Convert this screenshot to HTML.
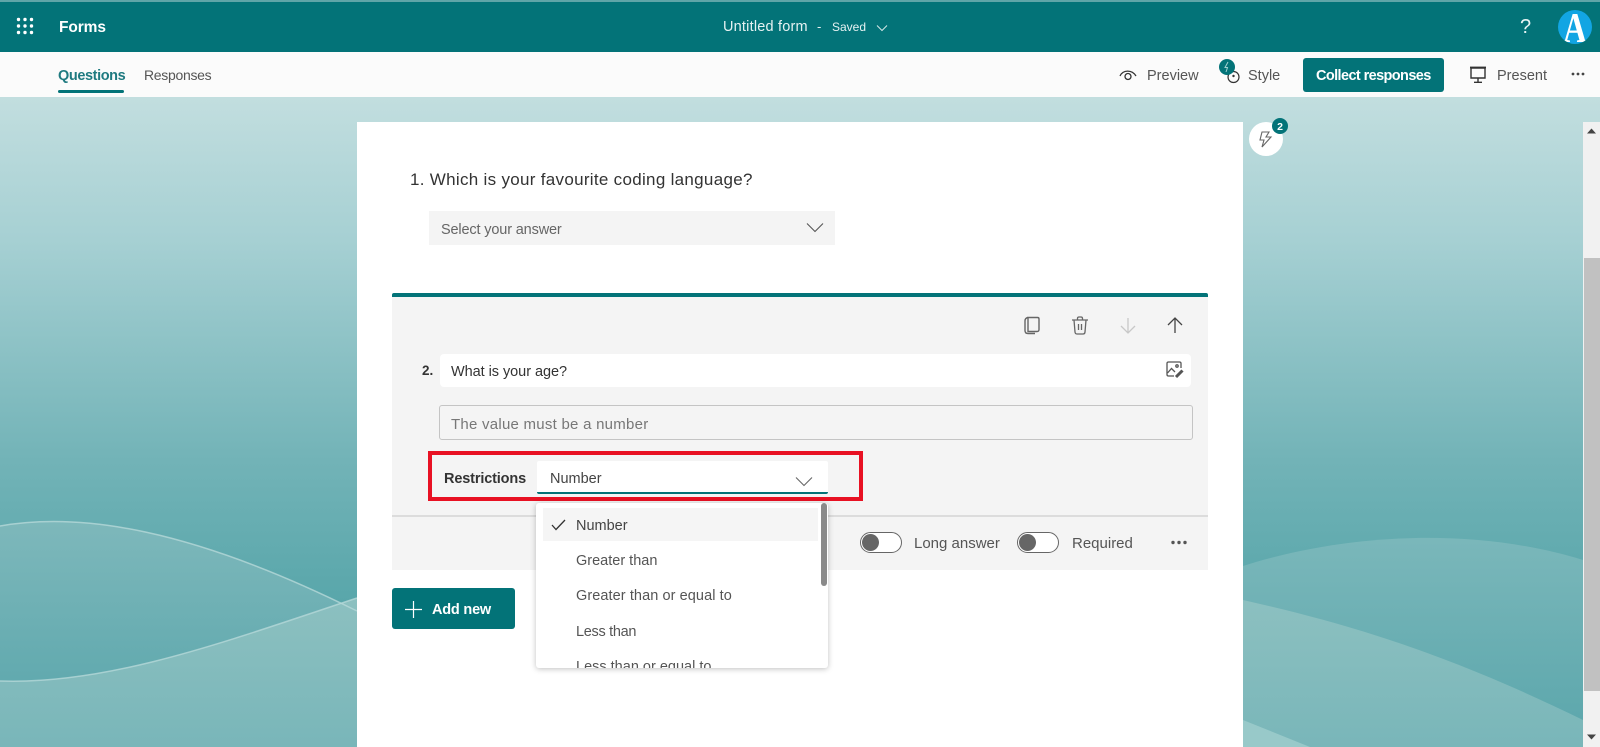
<!DOCTYPE html>
<html lang="en"><head><meta charset="utf-8"><title>Untitled form</title>
<style>
*{box-sizing:border-box}
html,body{margin:0;width:1600px;height:747px;overflow:hidden;background:#fff;font-family:"Liberation Sans",sans-serif;color:#333}
.a{position:absolute}
.t{position:absolute;white-space:nowrap;line-height:20px;height:20px}
svg{position:absolute;overflow:visible}
</style></head><body>
<svg style="left:0;top:0" width="1600" height="747" viewBox="0 0 1600 747">
<defs>
<linearGradient id="bg" x1="0" y1="0" x2="0" y2="1"><stop offset="0" stop-color="#c2dedf"/><stop offset=".22" stop-color="#a6d0d3"/><stop offset=".56" stop-color="#72b3b7"/><stop offset=".8" stop-color="#56a5a9"/><stop offset="1" stop-color="#56a5a9"/></linearGradient>
<linearGradient id="w1" gradientUnits="userSpaceOnUse" x1="0" y1="520" x2="0" y2="690"><stop offset="0" stop-color="#7eb8bb"/><stop offset="1" stop-color="#60a9ae"/></linearGradient>
<linearGradient id="w2" gradientUnits="userSpaceOnUse" x1="0" y1="600" x2="0" y2="747"><stop offset="0" stop-color="#8cc0c0"/><stop offset="1" stop-color="#79b6b9"/></linearGradient>
<linearGradient id="w3" gradientUnits="userSpaceOnUse" x1="0" y1="540" x2="0" y2="720"><stop offset="0" stop-color="#7ab7ba"/><stop offset="1" stop-color="#5ea8ad"/></linearGradient>
<clipPath id="av"><circle cx="17" cy="17" r="17"/></clipPath>
</defs>
<rect y="97" width="1600" height="650" fill="url(#bg)"/>
<path d="M0 526C80 512 190 528 357 611V747H0Z" fill="url(#w1)"/>
<path d="M0 681C110 685 230 640 357 598V747H0Z" fill="url(#w2)"/>
<path d="M0 526C80 512 190 528 357 611" fill="none" stroke="#b5d8d8" stroke-opacity=".8" stroke-width="1.5"/>
<path d="M0 681C110 685 230 640 357 598" fill="none" stroke="#b5d8d8" stroke-opacity=".8" stroke-width="1.5"/>
<path d="M1243 566C1340 535 1470 525 1583 560V747H1243Z" fill="url(#w3)"/>
<path d="M1243 600C1340 622 1440 650 1583 720V747H1243Z" fill="url(#w2)"/>
<path d="M1243 720L1310 747H1243Z" fill="#98c9c9"/>
</svg>

<!-- header -->
<div class="a" style="left:0;top:0;width:1600px;height:52px;background:#037378;border-top:2px solid #5fa5a8"></div>
<svg style="left:17px;top:18px" width="16" height="16" fill="#fff"><circle cx="1.5" cy="1.5" r="1.7"/><circle cx="8" cy="1.5" r="1.7"/><circle cx="14.5" cy="1.5" r="1.7"/><circle cx="1.5" cy="8" r="1.7"/><circle cx="8" cy="8" r="1.7"/><circle cx="14.5" cy="8" r="1.7"/><circle cx="1.5" cy="14.5" r="1.7"/><circle cx="8" cy="14.5" r="1.7"/><circle cx="14.5" cy="14.5" r="1.7"/></svg>
<div class="t" style="left:59px;top:18px;color:#fff;font-size:15.5px;font-weight:700;letter-spacing:-.1px">Forms</div>
<div class="t" style="left:723px;top:17px;color:#e6f2f2;font-size:14.5px;letter-spacing:.2px">Untitled form</div>
<div class="t" style="left:817px;top:17px;color:#e6f2f2;font-size:13px">-</div>
<div class="t" style="left:832px;top:17px;color:#e6f2f2;font-size:12px">Saved</div>
<svg style="left:876px;top:24px" width="12" height="8" fill="none" stroke="#d5e8e8" stroke-width="1"><path d="M1 1.5L6 6.5L11 1.5"/></svg>
<div class="t" style="left:1520px;top:16px;color:#e8f4f4;font-size:20px;line-height:22px">?</div>
<svg style="left:1558px;top:10px" width="34" height="34"><circle cx="17" cy="17" r="17" fill="#12a5e3"/><g clip-path="url(#av)"><text transform="translate(17 32) scale(.78 1)" text-anchor="middle" font-family="Liberation Serif,serif" font-size="42" font-weight="700" fill="#fff">A</text></g></svg>

<!-- command bar -->
<div class="a" style="left:0;top:52px;width:1600px;height:45px;background:#fbfbfb"></div>
<div class="t" style="left:58px;top:66px;color:#1f7a80;font-size:14.5px;font-weight:700;letter-spacing:-.4px">Questions</div>
<div class="a" style="left:58px;top:90px;width:66px;height:3px;background:#037378;border-radius:2px"></div>
<div class="t" style="left:144px;top:65px;color:#555;font-size:14px;letter-spacing:-.3px">Responses</div>
<svg style="left:1119px;top:68px" width="18" height="14" fill="none" stroke="#333" stroke-width="1.3"><path d="M1 8C4 1.5 13 1.5 17 8"/><circle cx="9" cy="8.5" r="3"/></svg>
<div class="t" style="left:1147px;top:66px;color:#555;font-size:14.5px">Preview</div>
<svg style="left:1219px;top:59px" width="22" height="24"><circle cx="14.5" cy="18" r="5.5" fill="none" stroke="#333" stroke-width="1.2"/><circle cx="14.5" cy="17" r="1.2" fill="#333"/><circle cx="8" cy="8" r="8" fill="#037378"/><path d="M9 3L6 8.500H8.500L7 13" fill="none" stroke="#9fd0d0" stroke-width="1"/></svg>
<div class="t" style="left:1248px;top:66px;color:#555;font-size:14.5px">Style</div>
<div class="a" style="left:1303px;top:58px;width:141px;height:34px;background:#037378;border-radius:3px"></div>
<div class="t" style="left:1316px;top:66px;color:#fff;font-size:14.5px;font-weight:700;letter-spacing:-.6px">Collect responses</div>
<svg style="left:1469px;top:66px" width="18" height="18" fill="none" stroke="#333" stroke-width="1.4"><path d="M2 2H16V12H2Z"/><path d="M1 1.500H17" stroke-width="1.800"/><path d="M9 12V16M5 16.300H13"/></svg>
<div class="t" style="left:1497px;top:66px;color:#555;font-size:14.5px">Present</div>
<svg style="left:1571px;top:72px" width="14" height="4" fill="#444"><circle cx="2" cy="2" r="1.400"/><circle cx="7" cy="2" r="1.400"/><circle cx="12" cy="2" r="1.400"/></svg>

<!-- card -->
<div class="a" style="left:357px;top:122px;width:886px;height:625px;background:#fff"></div>
<svg style="left:1249px;top:122px" width="40" height="36"><circle cx="17" cy="17" r="17" fill="#fff"/><path d="M20 10L13 10L11 18H15L13 25L22 15H17Z" fill="none" stroke="#666" stroke-width="1.100"/><circle cx="31" cy="4" r="8" fill="#037378"/><text x="31" y="8" text-anchor="middle" font-family="Liberation Sans,sans-serif" font-size="10.500" font-weight="700" fill="#fff">2</text></svg>

<div class="t" style="left:410px;top:170px;color:#333;font-size:17px;letter-spacing:.3px">1. Which is your favourite coding language?</div>
<div class="a" style="left:429px;top:211px;width:406px;height:34px;background:#f4f4f4"></div>
<div class="t" style="left:441px;top:220px;color:#666;font-size:14.5px;letter-spacing:-.15px">Select your answer</div>
<svg style="left:806px;top:222px" width="18" height="12" fill="none" stroke="#555" stroke-width="1.100"><path d="M1 1.500L9 9.500L17 1.500"/></svg>

<!-- active question -->
<div class="a" style="left:392px;top:293px;width:816px;height:277px;background:#f4f4f4;border-top:4px solid #037378;border-radius:2px 2px 0 0"></div>
<svg style="left:1023px;top:316px" width="18" height="19" fill="none" stroke="#666" stroke-width="1.400"><path d="M5 1.500H14.500Q16 1.500 16 3V13.500Q16 15.500 14 15.500H5Z"/><path d="M5 1.500Q2 2 2 5V14.500Q2 17.500 5 17.500H12"/></svg>
<svg style="left:1071px;top:316px" width="18" height="19" fill="none" stroke="#666" stroke-width="1.300"><path d="M1 4H17M6.500 4V2.500Q6.500 1 8 1H10Q11.500 1 11.500 2.500V4M3 4L4 16Q4.200 18 6 18H12Q13.800 18 14 16L15 4M7.500 8V14M10.500 8V14"/></svg>
<svg style="left:1120px;top:317px" width="16" height="17" fill="none" stroke="#c8c8c8" stroke-width="1.300"><path d="M8 1V16M1 9L8 16L15 9"/></svg>
<svg style="left:1167px;top:317px" width="16" height="17" fill="none" stroke="#444" stroke-width="1.300"><path d="M8 16V1M1 8L8 1L15 8"/></svg>

<div class="t" style="left:422px;top:361px;color:#333;font-size:13.500px;font-weight:700">2.</div>
<div class="a" style="left:440px;top:354px;width:751px;height:33px;background:#fff;border-radius:4px"></div>
<div class="t" style="left:451px;top:362px;color:#333;font-size:14.5px;letter-spacing:-.05px">What is your age?</div>
<svg style="left:1166px;top:361px" width="18" height="18" fill="none" stroke="#555" stroke-width="1.300"><path d="M15 7V2.500Q15 1 13.500 1H2.500Q1 1 1 2.500V13.500Q1 15 2.500 15H8"/><path d="M1.500 12L5.500 7.500L9 11"/><circle cx="11" cy="5" r="1.200"/><path d="M10 16L16.500 9.500" stroke-width="3"/></svg>
<div class="a" style="left:439px;top:405px;width:754px;height:35px;background:#f4f4f4;border:1px solid #c4c4c4;border-radius:3px"></div>
<div class="t" style="left:451px;top:415px;color:#777;font-size:15px;letter-spacing:.25px">The value must be a number</div>

<div class="a" style="left:392px;top:515px;width:816px;height:2px;background:#dcdcdc"></div>

<div class="a" style="left:428px;top:451px;width:435px;height:50px;border:4px solid #e81123"></div>
<div class="t" style="left:444px;top:469px;color:#333;font-size:14.5px;font-weight:700;letter-spacing:-.15px">Restrictions</div>
<div class="a" style="left:537px;top:461px;width:291px;height:33px;background:#fff;border-bottom:2px solid #037378;border-radius:2px"></div>
<div class="t" style="left:550px;top:469px;color:#444;font-size:14.5px">Number</div>
<svg style="left:795px;top:476px" width="18" height="11" fill="none" stroke="#666" stroke-width="1.100"><path d="M1 1.500L9 9.500L17 1.500"/></svg>

<!-- toggles -->
<div class="a" style="left:860px;top:532px;width:42px;height:21px;background:#fff;border:1px solid #666;border-radius:11px"></div>
<div class="a" style="left:862px;top:534px;width:17px;height:17px;background:#666;border-radius:50%"></div>
<div class="t" style="left:914px;top:534px;color:#555;font-size:15px">Long answer</div>
<div class="a" style="left:1017px;top:532px;width:42px;height:21px;background:#fff;border:1px solid #666;border-radius:11px"></div>
<div class="a" style="left:1019px;top:534px;width:17px;height:17px;background:#666;border-radius:50%"></div>
<div class="t" style="left:1072px;top:534px;color:#555;font-size:15px">Required</div>
<svg style="left:1170px;top:540px" width="18" height="5" fill="#555"><circle cx="3" cy="2.500" r="1.700"/><circle cx="9" cy="2.500" r="1.700"/><circle cx="15" cy="2.500" r="1.700"/></svg>

<!-- add new -->
<div class="a" style="left:392px;top:588px;width:123px;height:41px;background:#037378;border-radius:3px"></div>
<svg style="left:405px;top:601px" width="17" height="17" stroke="#fff" stroke-width="1.200"><path d="M8.500 0V17M0 8.500H17"/></svg>
<div class="t" style="left:432px;top:600px;color:#fff;font-size:14.5px;font-weight:700;letter-spacing:-.2px">Add new</div>

<!-- dropdown -->
<div class="a" style="left:536px;top:503px;width:292px;height:165px;background:#fff;border-radius:3px;box-shadow:0 1px 6px rgba(0,0,0,.25);overflow:hidden">
<div class="a" style="left:7px;top:5px;width:275px;height:33px;background:#f5f5f5"></div>
<div class="a" style="left:285px;top:0;width:6px;height:83px;background:#8a8a8a;border-radius:3px"></div>
<svg style="left:15px;top:16px" width="15" height="12" fill="none" stroke="#333" stroke-width="1.300"><path d="M1 6L5 10.500L14 1"/></svg>
<div class="t" style="left:40px;top:13px;color:#444;font-size:14.5px">Number</div>
<div class="t" style="left:40px;top:48px;color:#555;font-size:14.5px">Greater than</div>
<div class="t" style="left:40px;top:83px;color:#555;font-size:14.5px;letter-spacing:.08px">Greater than or equal to</div>
<div class="t" style="left:40px;top:119px;color:#555;font-size:14.5px;letter-spacing:-.3px">Less than</div>
<div class="t" style="left:40px;top:154px;color:#555;font-size:14.5px">Less than or equal to</div>
</div>

<!-- page scrollbar -->
<div class="a" style="left:1583px;top:122px;width:17px;height:625px;background:#f1f1f1"></div>
<div class="a" style="left:1584px;top:258px;width:16px;height:433px;background:#c1c1c1"></div>
<svg style="left:1587px;top:128px" width="9" height="6" fill="#444"><path d="M0 5.500L4.500 .5L9 5.500Z"/></svg>
<svg style="left:1587px;top:734px" width="9" height="6" fill="#444"><path d="M0 .5L4.500 5.500L9 .5Z"/></svg>
</body></html>
